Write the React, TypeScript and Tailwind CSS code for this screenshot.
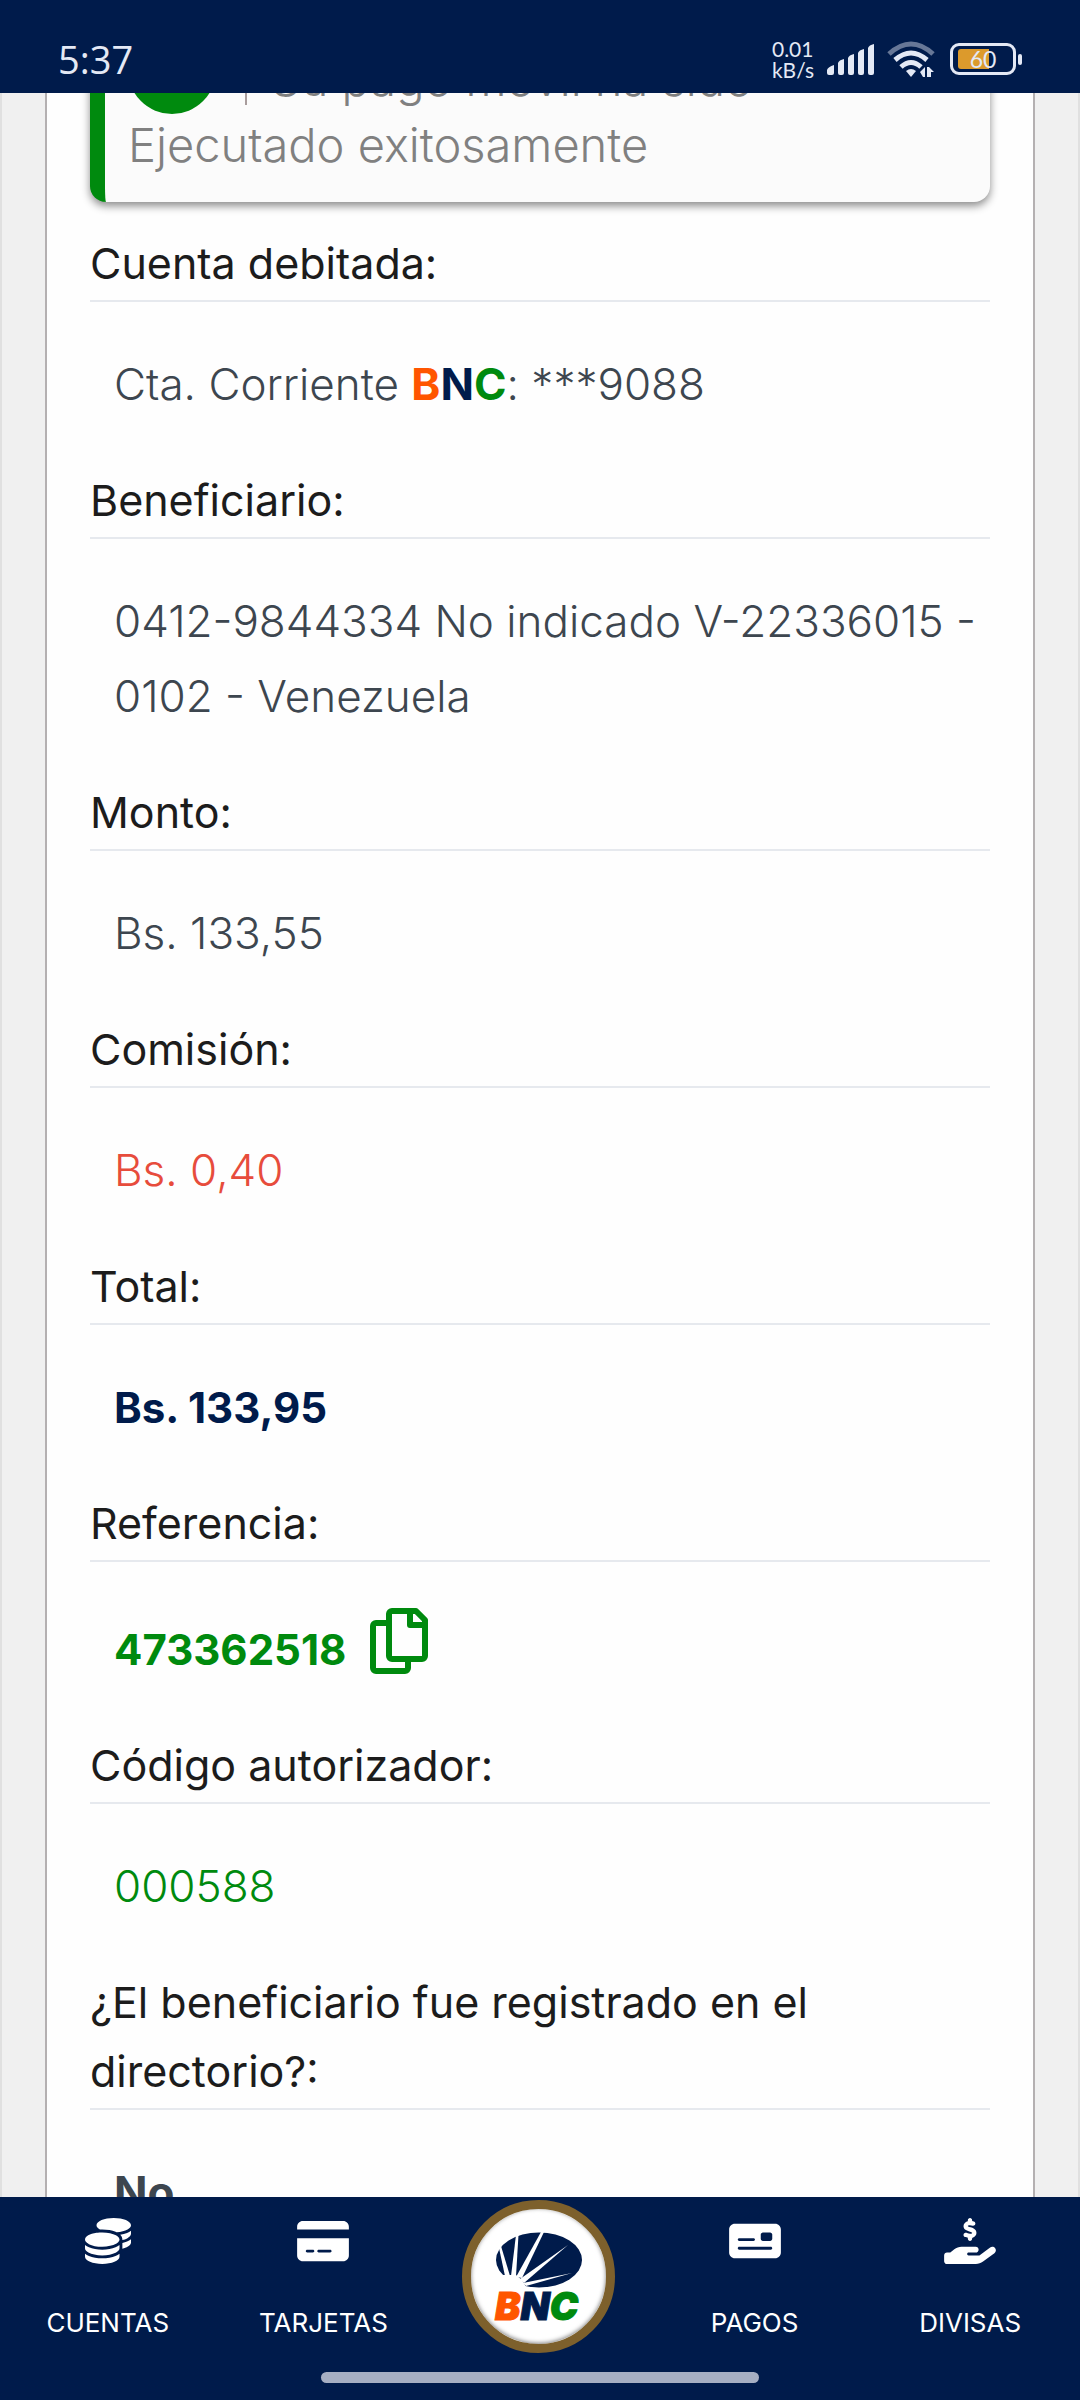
import React from "react";
import { FaCoins, FaCreditCard, FaMoneyCheck, FaHandHoldingDollar } from "react-icons/fa6";

function StatusBar() {
  return (
    <header className="flex h-[93px] shrink-0 items-end justify-between bg-[#001b4b] pr-[58px] pb-[13px] pl-[58px] text-[#e4e9f5]">
      <time className="font-['Open_Sans',sans-serif] text-[38px] leading-[42px]">5:37</time>
      <div className="flex items-center gap-[13px]">
        <div className="font-['Lato',sans-serif] text-[21px] leading-[21px]">
          <div>0.01</div>
          <div>kB/s</div>
        </div>
        <svg width="47" height="32" viewBox="0 0 47 32" fill="currentColor" aria-label="Señal">
          <path d="M0 30v-3q1-3 7-5v8q0 2-2 2H2q-2 0-2-2zM11 30V20q1-3 6-4v14q0 2-2 2h-2q-2 0-2-2zM21 30V15q1-3 6-4v19q0 2-2 2h-2q-2 0-2-2zM31 30V10q1-3 6-4v24q0 2-2 2h-2q-2 0-2-2zM41 30V5q1-3 6-4v29q0 2-2 2h-2q-2 0-2-2z" />
        </svg>
        <svg width="48" height="36" viewBox="0 0 48 36" fill="none" stroke="currentColor" strokeWidth="5" aria-label="Wi-Fi">
          <path d="M2 13Q24-7 46 13" opacity=".45" />
          <path d="M8 19Q24 5 40 19" />
          <path d="M14 26Q24 17 34 26" />
          <path d="M19 30q5-4 10 0l-5 6z" fill="currentColor" stroke="none" />
          <path d="M33 31l5-5v10h-2zM40 26h2l5 5h-3v5h-4z" fill="currentColor" stroke="none" />
        </svg>
        <div className="flex items-center gap-[2px] pl-[2px]" aria-label="Batería">
          <div className="relative flex h-8 w-[66px] items-center justify-center rounded-[9px] border-[3px] border-[#e4e9f5]">
            <div className="absolute inset-y-[3px] left-[5px] w-[31px] rounded-l-[3px] bg-[#dc9a2c]" />
            <span className="relative font-['Lato',sans-serif] text-[23px] leading-6">60</span>
          </div>
          <div className="h-[11px] w-1 rounded-full bg-[#e4e9f5]" />
        </div>
      </div>
    </header>
  );
}

function CopyIcon() {
  return (
    <svg width="58" height="66" viewBox="0 0 58 66" fill="none" stroke="currentColor" strokeWidth="6" strokeLinejoin="round">
      <path d="M19 15H6a3 3 0 0 0-3 3v42a3 3 0 0 0 3 3h29a3 3 0 0 0 3-3v-9" />
      <path d="M22 3h24l9 9v36a3 3 0 0 1-3 3H22a3 3 0 0 1-3-3V6a3 3 0 0 1 3-3z" />
      <path d="M40 3v14h15" />
    </svg>
  );
}

function Field({ label, children }: { label: string; children: React.ReactNode }) {
  return (
    <div className="mb-11">
      <dt className="border-b-2 border-[#e6e9ee] pb-[2px] text-[43px] leading-[69px] font-normal text-[#1c1c1c]">{label}</dt>
      <dd className="mt-[45px] pl-6 text-[44px] leading-[75px] font-light text-[#3d464f]">{children}</dd>
    </div>
  );
}

function BncLogo() {
  return (
    <svg width="86" height="90" viewBox="0 0 86 90" className="overflow-visible" aria-label="BNC">
      <ellipse cx="43" cy="28" rx="43" ry="27.5" fill="#001b4b" />
      <g fill="#fff">
        <path d="M3 16l2-2 9 30H9z" />
        <path d="M20 3h2.500L20 44h-5z" />
        <path d="M45 0h3L26 46l-6-1z" />
        <path d="M72 13L28 51l-4-4z" />
        <path d="M76 41L30 54l-3-3z" />
        <path d="M-1 42l9 1h12l6 5 3 5 1 3-31 2z" />
      </g>
      <text x="-1" y="88" fontFamily="Inter, sans-serif" fontWeight="900" fontStyle="italic" fontSize="38" strokeWidth="1">
        <tspan fill="#ff5500" stroke="#ff5500">B</tspan>
        <tspan fill="#001b4b" stroke="#001b4b">N</tspan>
        <tspan fill="#008a0e" stroke="#008a0e">C</tspan>
      </text>
    </svg>
  );
}

function NavItem({ icon, label }: { icon: React.ReactNode; label: string }) {
  return (
    <a href="#" className="flex flex-col items-center gap-[43px] pt-[21px] text-white">
      {icon}
      <span className="text-[26px] leading-8">{label}</span>
    </a>
  );
}

export default function App() {
  return (
    <div className="flex h-screen flex-col overflow-hidden bg-[#f0f0f0] font-['Inter',sans-serif]">
      <StatusBar />
      <main className="min-h-0 flex-1 overflow-hidden border-x-2 border-[#e0e0e0] px-[43px]">
        <section className="border-x-2 border-[#b4b0b1] bg-[#fefefe] px-[43px]">
          <div role="status" className="-mt-14 rounded-2xl border-l-[15px] border-[#008a0e] bg-[#fbfbfb] pr-4 pb-6 pl-[23px] text-[47px] leading-[67px] font-light text-[#808080] shadow-[0_4px_8px_rgba(0,0,0,0.45)]">
            <div className="flex h-[74px] items-center">
              <span className="mb-2 size-[88px] shrink-0 rounded-full bg-[#008a0e]" />
              <span className="mb-2 ml-[29px] h-[70px] w-[2px] shrink-0 bg-[#a89c9c]" />
              <span className="mt-2 ml-6">Su pago móvil ha sido</span>
            </div>
            <p>Ejecutado exitosamente</p>
          </div>
          <dl className="pt-[27px]">
            <Field label="Cuenta debitada:">
              Cta. Corriente{" "}
              <b className="font-bold"><span className="text-[#ff5500]">B</span><span className="text-[#001b4b]">N</span><span className="text-[#008a0e]">C</span></b>
              : ***9088
            </Field>
            <Field label="Beneficiario:">0412-9844334 No indicado V-22336015 - 0102 - Venezuela</Field>
            <Field label="Monto:">Bs. 133,55</Field>
            <Field label="Comisión:"><span className="text-[#e74c3c]">Bs. 0,40</span></Field>
            <Field label="Total:"><b className="text-[42px] font-bold text-[#001b4b]">Bs. 133,95</b></Field>
            <Field label="Referencia:">
              <span className="flex h-20 items-center gap-6 pt-1 text-[42px] font-bold text-[#008a0e]">
                473362518
                <button aria-label="Copiar referencia" className="mb-4"><CopyIcon /></button>
              </span>
            </Field>
            <Field label="Código autorizador:"><span className="text-[#008a0e]">000588</span></Field>
            <Field label="¿El beneficiario fue registrado en el directorio?:"><b className="font-bold">No</b></Field>
          </dl>
        </section>
      </main>
      <nav className="shrink-0 bg-[#001b4b] pb-[17px]">
        <div className="grid h-[175px] grid-cols-5 pr-0.5">
          <NavItem icon={<FaCoins className="size-[46px]" />} label="CUENTAS" />
          <NavItem icon={<FaCreditCard className="h-[46px] w-[52px]" />} label="TARJETAS" />
          <a href="#" aria-label="Inicio" className="mt-[3px] flex size-[153px] items-center justify-center justify-self-center rounded-full border-[9px] border-[#7d602c] bg-white shadow-[inset_0_-1px_4px_rgba(0,0,0,0.5)]">
            <BncLogo />
          </a>
          <NavItem icon={<FaMoneyCheck className="h-[46px] w-[52px]" />} label="PAGOS" />
          <NavItem icon={<FaHandHoldingDollar className="h-[46px] w-[52px]" />} label="DIVISAS" />
        </div>
        <div className="mx-auto h-[11px] w-[438px] rounded-full bg-[#a6afc3]" />
      </nav>
    </div>
  );
}
